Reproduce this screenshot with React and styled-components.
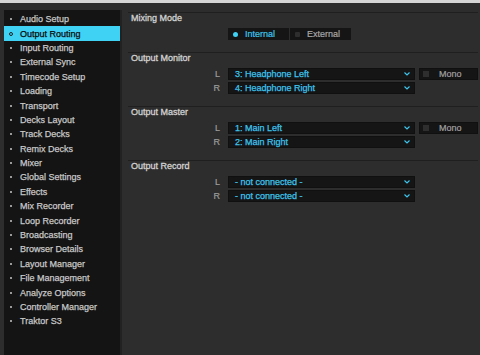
import React from "react";
import styled, { createGlobalStyle } from "styled-components";

const Global = createGlobalStyle`
  html, body { margin: 0; padding: 0; }
  body {
    width: 480px; height: 355px; overflow: hidden;
    background: #2d2d2d;
    font-family: "Liberation Sans", Arial, sans-serif;
    font-size: 9px;
  }
`;

const Page = styled.div`
  width: 480px;
  height: 355px;
  display: flex;
  flex-direction: column;
  background: #2d2d2d;
  overflow: hidden;
`;

const TopStrip = styled.div`
  height: 3px;
  background: #d6d6d6;
  flex: none;
`;

const Body = styled.div`
  flex: 1;
  display: flex;
  min-height: 0;
`;

const SideWrap = styled.div`
  flex: none;
  padding: 7px 0 0 4px;
  display: flex;
`;

const Sidebar = styled.ul`
  list-style: none;
  margin: 0;
  padding: 2px 0 0 0;
  width: 116px;
  background: #141414;
  border-right: 2px solid #222222;
`;

const Item = styled.li`
  height: 14.4px;
  display: flex;
  align-items: center;
  padding-left: 5px;
  background: ${p => (p.$active ? "#3fd2f4" : "transparent")};
  color: ${p => (p.$active ? "#0a0a0a" : "#c8c8c8")};
  -webkit-text-stroke: 0.25px currentColor;
  white-space: nowrap;
`;

const Bullet = styled.span`
  width: 11px;
  flex: none;
  display: flex;
  align-items: center;
`;

const Dot = styled.span`
  display: block;
  width: ${p => (p.$active ? "4px" : "2px")};
  height: ${p => (p.$active ? "4px" : "2px")};
  margin-left: ${p => (p.$active ? "0" : "1px")};
  border-radius: ${p => (p.$active ? "50%" : "0")};
  background: ${p => (p.$active ? "transparent" : "#9a9a9a")};
  border: ${p => (p.$active ? "1px solid #222" : "none")};
  box-sizing: border-box;
`;

const Main = styled.div`
  flex: 1;
  padding: 9px 2px 0 6px;
  display: flex;
  flex-direction: column;
`;

const Section = styled.section`
  border-top: 1px solid #1f1f1f;
  padding-bottom: 12px;
  display: flex;
  flex-direction: column;
`;

const Header = styled.div`
  height: 11px;
  line-height: 11px;
  padding-left: 3px;
  margin-bottom: 4px;
  color: #d2d2d2;
  font-size: 9px;
  -webkit-text-stroke: 0.3px currentColor;
`;

const Rows = styled.div`
  display: grid;
  grid-template-columns: 1fr 187px 59px;
  column-gap: 4px;
  row-gap: 2px;
`;

const Label = styled.div`
  grid-column: 1;
  text-align: right;
  padding-right: 4px;
  color: #9c9c9c;
  line-height: 12px;
  height: 12px;
  -webkit-text-stroke: 0.2px currentColor;
`;

const Select = styled.div`
  grid-column: 2;
  height: 12px;
  box-sizing: border-box;
  background: #151515;
  border: 1px solid #101010;
  display: flex;
  align-items: center;
  justify-content: space-between;
  padding: 0 4px 0 6px;
  color: #3ec4ec;
  -webkit-text-stroke: 0.25px currentColor;
  white-space: nowrap;
`;

const Chevron = () => (
  <svg width="6" height="4" viewBox="0 0 6 4">
    <polyline points="0.5,0.5 3,3 5.5,0.5" fill="none" stroke="#3ec4ec" strokeWidth="1.2" />
  </svg>
);

const Toggle = styled.div`
  grid-column: 3;
  height: 12px;
  box-sizing: border-box;
  background: #151515;
  border: 1px solid #101010;
  display: flex;
  align-items: center;
  padding-left: 3px;
  gap: 10px;
  color: #a0a0a0;
  -webkit-text-stroke: 0.2px currentColor;
`;

const Check = styled.span`
  width: 6px;
  height: 6px;
  background: #2e2e2e;
  display: block;
`;

const Radios = styled.div`
  grid-column: 2;
  display: flex;
  gap: 1px;
`;

const Radio = styled.div`
  width: 61px;
  height: 12px;
  box-sizing: border-box;
  background: #151515;
  display: flex;
  align-items: center;
  padding-left: 5px;
  gap: 7px;
  color: ${p => (p.$on ? "#3ec4ec" : "#a8a8a8")};
  -webkit-text-stroke: 0.2px currentColor;
`;

const RadioDot = styled.span`
  width: 5px;
  height: 5px;
  border-radius: ${p => (p.$on ? "50%" : "1px")};
  background: ${p => (p.$on ? "#3fd2f4" : "#2e2e2e")};
  display: block;
  flex: none;
`;

const items = [
  "Audio Setup", "Output Routing", "Input Routing", "External Sync", "Timecode Setup",
  "Loading", "Transport", "Decks Layout", "Track Decks", "Remix Decks", "Mixer",
  "Global Settings", "Effects", "Mix Recorder", "Loop Recorder", "Broadcasting",
  "Browser Details", "Layout Manager", "File Management", "Analyze Options",
  "Controller Manager", "Traktor S3",
];

const outputs = [
  { title: "Output Monitor", l: "3: Headphone Left", r: "4: Headphone Right", mono: true },
  { title: "Output Master", l: "1: Main Left", r: "2: Main Right", mono: true },
  { title: "Output Record", l: "- not connected -", r: "- not connected -", mono: false },
];

export default function App() {
  return (
    <Page>
      <Global />
      <TopStrip />
      <Body>
        <SideWrap>
          <Sidebar>
            {items.map(t => {
              const active = t === "Output Routing";
              return (
                <Item key={t} $active={active}>
                  <Bullet><Dot $active={active} /></Bullet>
                  {t}
                </Item>
              );
            })}
          </Sidebar>
        </SideWrap>
        <Main>
          <Section>
            <Header>Mixing Mode</Header>
            <Rows>
              <Radios>
                <Radio $on><RadioDot $on />Internal</Radio>
                <Radio><RadioDot />External</Radio>
              </Radios>
            </Rows>
          </Section>
          {outputs.map(o => (
            <Section key={o.title}>
              <Header>{o.title}</Header>
              <Rows>
                <Label>L</Label>
                <Select>{o.l}<Chevron /></Select>
                {o.mono ? (
                  <Toggle><Check />Mono</Toggle>
                ) : (
                  <span />
                )}
                <Label>R</Label>
                <Select>{o.r}<Chevron /></Select>
              </Rows>
            </Section>
          ))}
        </Main>
      </Body>
    </Page>
  );
}
